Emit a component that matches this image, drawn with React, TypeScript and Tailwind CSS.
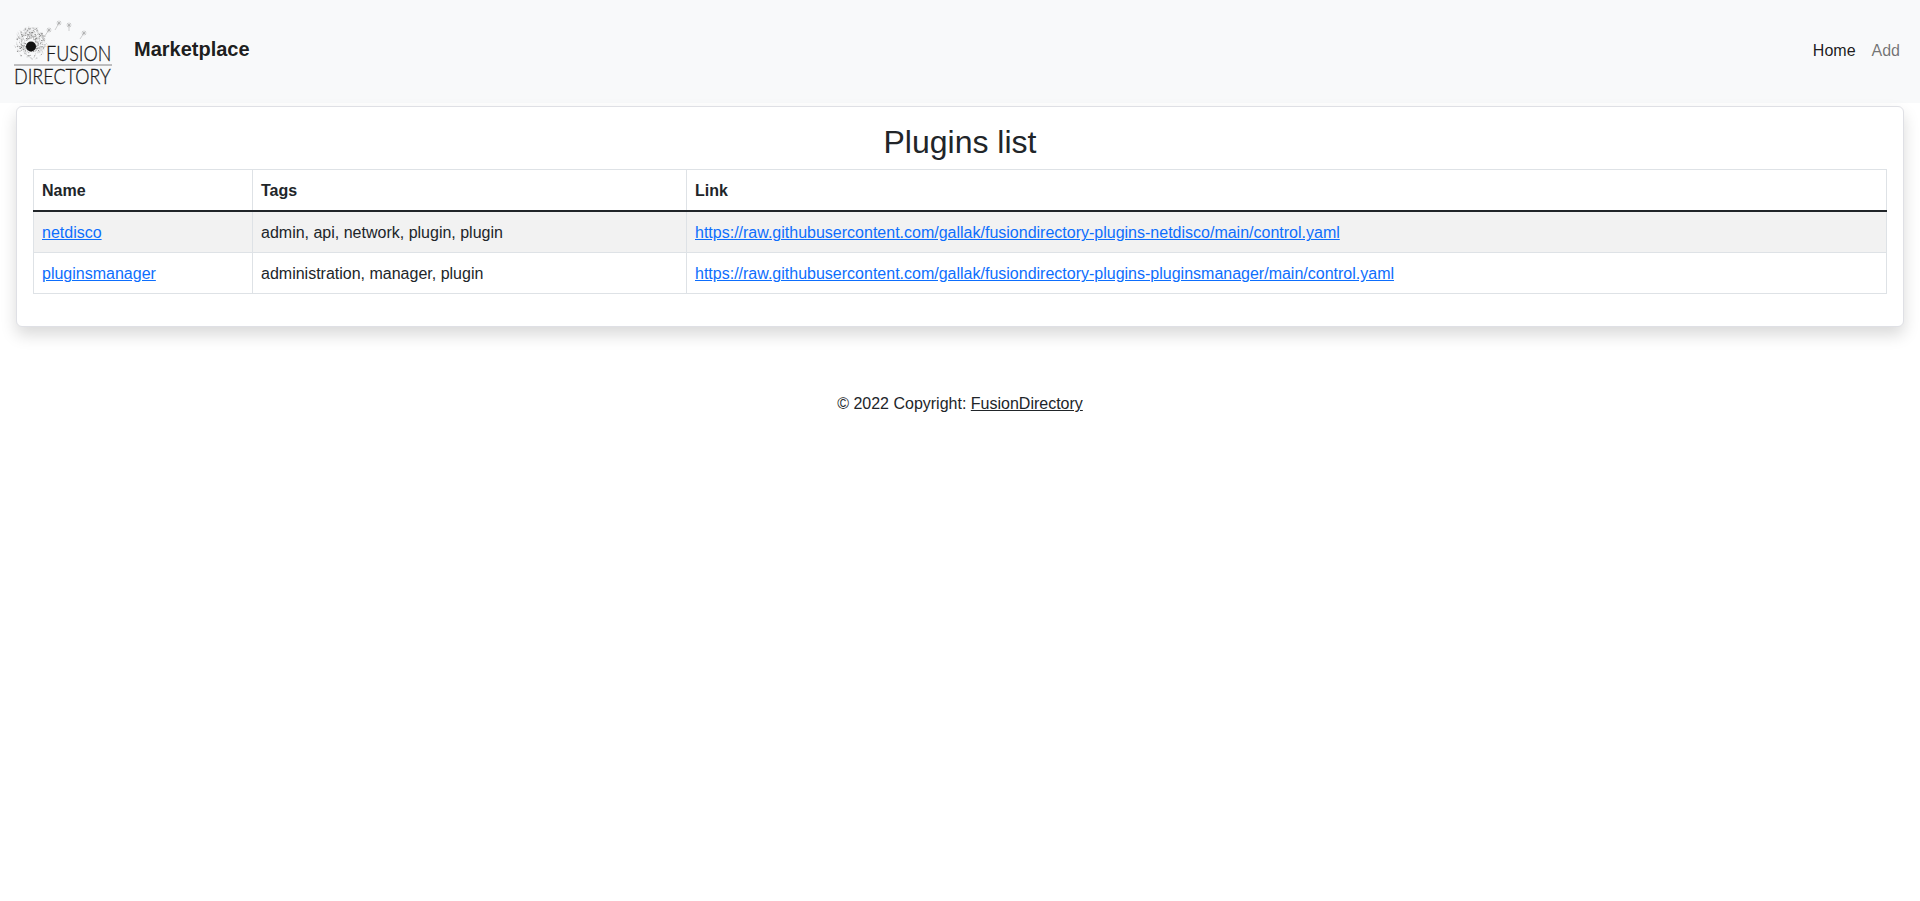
const plugins = [
  {
    name: "netdisco",
    tags: "admin, api, network, plugin, plugin",
    link: "https://raw.githubusercontent.com/gallak/fusiondirectory-plugins-netdisco/main/control.yaml",
  },
  {
    name: "pluginsmanager",
    tags: "administration, manager, plugin",
    link: "https://raw.githubusercontent.com/gallak/fusiondirectory-plugins-pluginsmanager/main/control.yaml",
  },
];

// seeded so the dandelion head is the same on every render
function seedSpeckles() {
  const out: { x: number; y: number; r: number; x2: number; y2: number }[] = [];
  let s = 7;
  const rnd = () => {
    s = (s * 16807) % 2147483647;
    return s / 2147483647;
  };
  for (let i = 0; i < 240; i++) {
    const a = rnd() * Math.PI * 2;
    const d = 5 + rnd() * 11;
    const x = 18 + Math.cos(a) * d;
    const y = 27.5 + Math.sin(a) * d;
    const t = rnd() * 2.5;
    out.push({ x, y, r: 0.2 + rnd() * 0.4, x2: x + Math.cos(a + t) * 2.5, y2: y + Math.sin(a + t) * 2.5 });
  }
  return out;
}

const speckles = seedSpeckles();
const seeds = [
  [36, 14, 31, 21],
  [46, 7, 42, 14],
  [56, 9, 56, 15],
  [71, 17, 67, 23],
];

function Logo() {
  return (
    <svg width="100" height="72" viewBox="0 0 100 72" className="block shrink-0">
      {speckles.map((p, i) => (
        <g key={i}>
          <line x1={p.x} y1={p.y} x2={p.x2} y2={p.y2} stroke="#b5b5b5" strokeWidth="0.3" />
          <circle cx={p.x} cy={p.y} r={p.r} fill="#777" />
        </g>
      ))}
      <circle cx="18" cy="30.5" r="5" fill="#111" />
      {seeds.map(([x, y, x2, y2], i) => (
        <g key={i} stroke="#999" strokeWidth="0.45">
          <line x1={x} y1={y} x2={x2} y2={y2} />
          <line x1={x - 2.5} y1={y} x2={x + 2.5} y2={y} />
          <line x1={x} y1={y - 2.5} x2={x} y2={y + 2.5} />
          <line x1={x - 2} y1={y - 2} x2={x + 2} y2={y + 2} />
          <line x1={x - 2} y1={y + 2} x2={x + 2} y2={y - 2} />
        </g>
      ))}
      <g fontSize="18" fontWeight="300" fontFamily="Lato, sans-serif" fill="#1a1a1a" stroke="#1a1a1a" strokeWidth="0.25">
        <text transform="translate(33 44.5) scale(1 1.2)">FUSION</text>
        <text transform="translate(1 67.5) scale(1 1.2)">DIRECTORY</text>
      </g>
      <line x1="1" y1="49" x2="99" y2="49" stroke="#666" strokeWidth="0.8" />
    </svg>
  );
}

export default function App() {
  return (
    <div className="min-h-[901px] bg-white font-['Liberation_Sans',Arial,sans-serif] text-base leading-6 text-[#212529]">
      <nav className="flex h-[103px] items-center bg-[#f8f9fa] pl-[13px] pr-[12px]">
        <Logo />
        <a href="#" className="mb-[5px] ml-[21px] text-xl font-bold leading-[30px] text-[rgba(0,0,0,0.9)]">
          Marketplace
        </a>
        <div className="mb-[2px] ml-auto flex">
          <a href="#" className="p-2 text-[rgba(0,0,0,0.9)]">Home</a>
          <a href="#" className="p-2 text-[rgba(0,0,0,0.55)]">Add</a>
        </div>
      </nav>

      <main className="mx-4 mt-[3px] rounded-md border border-[#dfe0e5] bg-white p-4 shadow-[0_8px_16px_rgba(0,0,0,0.15)]">
        <h2 className="mb-2 text-center text-[32px] font-medium leading-[38.4px]">Plugins list</h2>
        <table className="mb-4 w-full table-fixed border-collapse border border-[#dee2e6]">
          <colgroup>
            <col className="w-[219px]" />
            <col className="w-[434px]" />
            <col />
          </colgroup>
          <thead>
            <tr className="border-b-2 border-[#212529]">
              <th className="border-x border-[#dee2e6] px-2 pb-[7px] pt-[9px] text-left font-bold">Name</th>
              <th className="border-x border-[#dee2e6] px-2 pb-[7px] pt-[9px] text-left font-bold">Tags</th>
              <th className="border-x border-[#dee2e6] px-2 pb-[7px] pt-[9px] text-left font-bold">Link</th>
            </tr>
          </thead>
          <tbody>
            {plugins.map((p, i) => (
              <tr key={p.name} className={i % 2 === 0 ? "bg-[#f2f2f2]" : "bg-white"}>
                <td className="border border-[#dee2e6] px-2 pb-[7px] pt-[9px]">
                  <a href="#" className="text-[#0d6efd] underline">{p.name}</a>
                </td>
                <td className="border border-[#dee2e6] px-2 pb-[7px] pt-[9px]">{p.tags}</td>
                <td className="border border-[#dee2e6] px-2 pb-[7px] pt-[9px]">
                  <a href="#" className="text-[#0d6efd] underline">{p.link}</a>
                </td>
              </tr>
            ))}
          </tbody>
        </table>
      </main>

      <footer className="mt-[65px] text-center">
        © 2022 Copyright: <a href="#" className="text-[#212529] underline">FusionDirectory</a>
      </footer>
    </div>
  );
}
